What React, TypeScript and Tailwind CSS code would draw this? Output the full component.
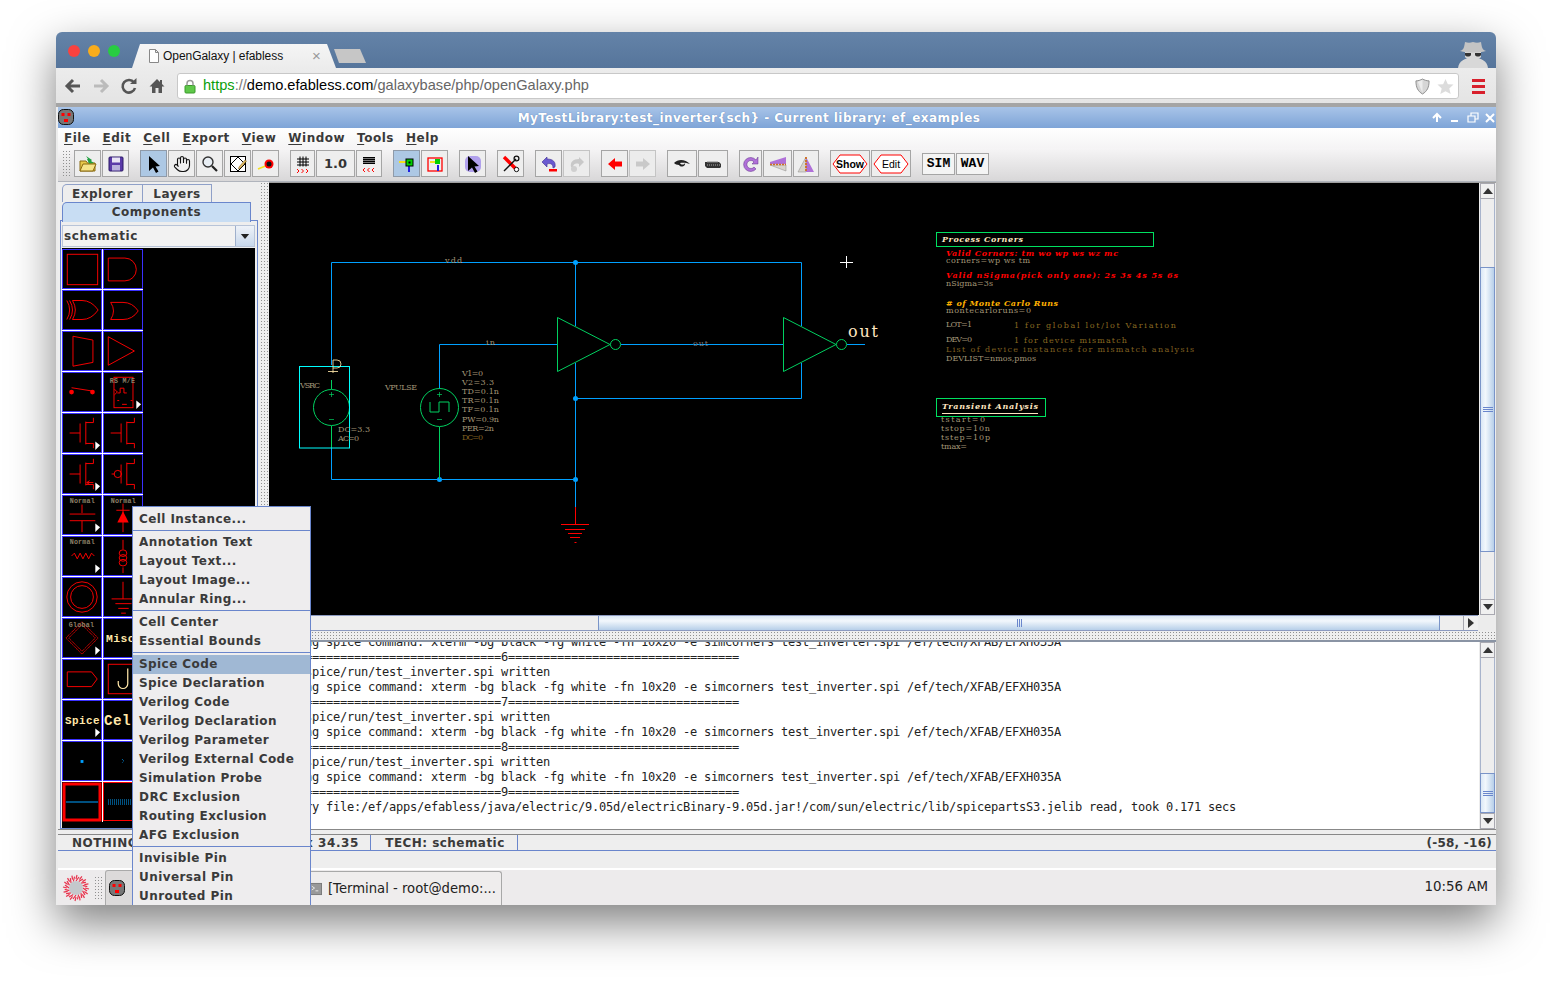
import React from "react";
import { Hand } from "lucide-react";

const R = "#ff0000";
const Tri = () => <polygon points="34,29 39,33 34,38" fill="#fff" />;
const Lbl = ({ t, x = 7, y = 7, c = "#8d8068" }: { t: string; x?: number; y?: number; c?: string }) => (
  <text x={x} y={y} fontSize="7" fill={c} fontFamily="'Liberation Mono', monospace" textLength={27}>{t}</text>
);
const Mos = ({ bubble, arrow }: { bubble?: boolean; arrow?: boolean }) => (
  <g stroke={R} fill="none">
    <path d={bubble ? "M8 20h3M19 20h-1" : "M7 20h11"} />
    {bubble && <circle cx="14.5" cy="20" r="3.8" />}
    <path d="M18 10v20M24 8v24M24 9h8V4M24 31h8v5" />
    {arrow && <path d="M25 29h7M25 29l3-2M25 29l3 2" />}
  </g>
);
const cells: React.ReactNode[] = [
  <rect x="4.5" y="4.5" width="32" height="32" fill="none" stroke={R} />,
  <path d="M4.5 8.5H22A12 12 0 0 1 22 32.5H4.5Z" fill="none" stroke={R} />,
  <g fill="none" stroke={R}><path d="M4 10Q10 20 4 30M7 10Q13 20 7 30M10 10Q16 20 10 30M10 10H20Q30 10 37 20Q30 30 20 30H10" /></g>,
  <g fill="none" stroke={R}><path d="M7 12Q13 21 7 30M7 12H20Q30 12 36 21Q30 30 20 30H7" /></g>,
  <polygon points="10.5,4.5 31.5,8.5 31.5,32 10.5,36" fill="none" stroke={R} />,
  <polygon points="4.5,5 32,20 4.5,35" fill="none" stroke={R} />,
  <g><circle cx="9" cy="20" r="2.5" fill={R} /><circle cx="31" cy="20" r="2.5" fill={R} /><path d="M9 15.5L31 19" stroke={R} fill="none" /></g>,
  <g><rect x="10.5" y="4.5" width="20" height="32" fill="none" stroke={R} /><path d="M11 17l3 3-3 3M14 21h3v-5h4v5h3M14 29h2M19 33h5M28 29h2" stroke={R} fill="none" /><Lbl t="RS M/E" x="6" y="10" /><Tri /></g>,
  <g><Mos /><Tri /></g>,
  <Mos />,
  <g><Mos arrow /><Tri /></g>,
  <Mos bubble />,
  <g><Lbl t="Normal" /><path d="M20 9v9M7 19h27M7 26h27M20 26v12" stroke={R} fill="none" /><Tri /></g>,
  <g><Lbl t="Normal" /><polygon points="20,16 26,28 14,28" fill={R} /><path d="M20 8v30M13 15h14" stroke={R} fill="none" /></g>,
  <g><Lbl t="Normal" /><path d="M9 20l3-3 3 6 3-6 3 6 3-6 3 6 3-6 3 3" stroke={R} fill="none" /><Tri /></g>,
  <g stroke={R} fill="none"><path d="M20 3v10M20 32v6" /><ellipse cx="20" cy="17" rx="4" ry="3.5" /><ellipse cx="20" cy="22" rx="4" ry="3.5" /><ellipse cx="20" cy="27" rx="4" ry="3.5" /></g>,
  <g stroke={R} fill="none"><circle cx="20" cy="20" r="16" /><circle cx="20" cy="20" r="12" /></g>,
  <path d="M20 4v18M8 22h25M12 27h17M15 32h11M18 37h5" stroke={R} fill="none" />,
  <g><polygon points="20,3 37,20 20,37 3,20" fill="none" stroke={R} strokeDasharray="1.2 0.6" /><polygon points="20,6 34,20 20,34 6,20" fill="none" stroke={R} strokeDasharray="1.2 0.6" /><Lbl t="Global" x="6" y="8" /><Tri /></g>,
  <text x="2" y="24" fontSize="12" fontWeight="700" fill="#ffe6a8" fontFamily="'Liberation Mono', monospace">Misc.</text>,
  <polygon points="4.5,12.5 30,12.5 36,20 30,28 4.5,28" fill="none" stroke={R} />,
  <g><rect x="4.5" y="4.5" width="36" height="31" fill="none" stroke={R} /><path d="M25 9v16a5 5 0 0 1-10 0v-3" fill="none" stroke="#ffe6a8" strokeWidth="1.3" /></g>,
  <g><text x="2" y="24" fontSize="11.5" fontWeight="700" fill="#ffe6a8" fontFamily="'Liberation Mono', monospace">Spice</text><Tri /></g>,
  <text x="0" y="25" fontSize="15" fontWeight="700" fill="#ffe6a8" fontFamily="'Liberation Mono', monospace">Cell</text>,
  <rect x="18.5" y="19" width="3" height="3" fill="#00a0ff" />,
  <path d="M19 18l2 2-2 2" stroke="#00a0ff" fill="none" strokeDasharray="1 1" />,
  <g><rect x="2" y="2" width="36" height="36" fill="none" stroke={R} strokeWidth="3" /><path d="M4 20h32" stroke="#00a0ff" /></g>,
  <g><rect x="0.5" y="0.5" width="45" height="38" fill="none" stroke={R} /><path d="M5 18h36M5 20h36M5 22h36" stroke="#00a0ff" strokeDasharray="1 1" /></g>,
];

const serif = "'DejaVu Serif', serif";
const T = ({ x, y, w, c = "#a39677", s = 8, it, b, children }: { x: number; y: number; w?: number; c?: string; s?: number; it?: boolean; b?: boolean; children: string }) => (
  <text x={x} y={y} fill={c} fontSize={s} fontFamily={serif} fontStyle={it ? "italic" : undefined} fontWeight={b ? 700 : 400} textLength={w} lengthAdjust={w ? "spacing" : undefined}>{children}</text>
);

const Schematic = () => {
  const blue = "#00a0ff";
  const green = "#00d060";
  return (
    <svg viewBox="269 183 1210 432" className="block w-[1210px] h-[432px] bg-black">
      <g fill="none" stroke={blue}>
        <path d="M331.5 365V262.5H801.5V326M575.5 262.5V326M575.5 363V507M801.5 363V398.5H575.5M331.5 448V479.5H575.5M439.5 388V344.5H557M621 344.5H783M847 344.5H865" />
      </g>
      <g fill={blue}>
        <circle cx="575.5" cy="262.5" r="2.5" />
        <circle cx="575.5" cy="398.5" r="2.5" />
        <circle cx="439.5" cy="479.5" r="2.5" />
        <circle cx="575.5" cy="479.5" r="2.5" />
      </g>
      <g fill="none" stroke={green}>
        <polygon points="557.5,317.5 610,344.5 557.5,371.5" />
        <circle cx="615.5" cy="344.5" r="5" />
        <polygon points="783.5,317.5 836,344.5 783.5,371.5" />
        <circle cx="841.5" cy="344.5" r="5" />
        <circle cx="331.5" cy="407.5" r="18" />
        <circle cx="439.5" cy="407.5" r="19" />
        <path d="M331.5 380V389M331.5 426V448M439.5 388V389M439.5 427V479M430 402V412H439V402H449V412" />
        <path d="M329 394.5h5M331.5 392v5M329 419.5h5M437 394.5h5M439.5 392v5M437 419.5h5" strokeOpacity="0.7" />
      </g>
      <rect x="299.5" y="366.5" width="50" height="81.5" fill="none" stroke="#00ffff" />
      <path d="M333 373V360h4a3 3 0 0 1 0 8h-4M328 371.5h10" fill="none" stroke="#ffe6a8" strokeOpacity="0.85" />
      <path d="M575.5 507V525M561 524.5H589M565 529.5H585M568 533.5H582M570 537.5H580M574.5 542.5H576.5" fill="none" stroke={R} />
      <path d="M846.5 256V268M840 262.5H853" fill="none" stroke="#fff" />

      <T x={445} y={263} w={17}>vdd</T>
      <T x={486} y={345} w={9}>in</T>
      <T x={693} y={346} w={15} c="#7a7a7a">out</T>
      <text x={848} y={337} fill="#ffe6c0" fontSize="16" fontFamily="'DejaVu Serif', serif" textLength={30}>out</text>
      <T x={300} y={388} w={20}>VSRC</T>
      <T x={385} y={390} w={32}>VPULSE</T>
      <T x={338} y={432} w={32}>DC=3.3</T>
      <T x={338} y={441} w={21}>AC=0</T>
      <T x={462} y={376} w={21}>V1=0</T>
      <T x={462} y={385} w={32}>V2=3.3</T>
      <T x={462} y={394} w={37}>TD=0.1n</T>
      <T x={462} y={403} w={37}>TR=0.1n</T>
      <T x={462} y={412} w={37}>TF=0.1n</T>
      <T x={462} y={422} w={37}>PW=0.9n</T>
      <T x={462} y={431} w={32}>PER=2n</T>
      <T x={462} y={440} w={21} c="#806020">DC=0</T>

      <rect x="936.5" y="232.5" width="217" height="14" fill="none" stroke="#00e060" />
      <T x={942} y={242} w={81} c="#ffe6c0" it b>Process Corners</T>
      <T x={946} y={256} w={172} c={R} it b>Valid Corners: tm wo wp ws wz mc</T>
      <T x={946} y={263} w={84}>corners=wp ws tm</T>
      <T x={946} y={278} w={232} c={R} it b>Valid nSigma(pick only one): 2s 3s 4s 5s 6s</T>
      <T x={946} y={286} w={47}>nSigma=3s</T>
      <T x={946} y={306} w={112} c="#ffb000" it b>{"# of Monte Carlo Runs"}</T>
      <T x={946} y={313} w={85}>montecarloruns=0</T>
      <T x={946} y={327} w={26}>LOT=1</T>
      <T x={1014} y={328} w={162} c="#8a6a20">1 for global lot/lot Variation</T>
      <T x={946} y={342} w={26}>DEV=0</T>
      <T x={1014} y={343} w={113} c="#8a6a20">1 for device mismatch</T>
      <T x={946} y={352} w={248} c="#806020">List of device instances for mismatch analysis</T>
      <T x={946} y={361} w={90}>DEVLIST=nmos,pmos</T>
      <rect x="936.5" y="398.5" width="109" height="18" fill="none" stroke="#00e060" />
      <T x={942} y={409} w={96} c="#ffe6c0" it b>Transient Analysis</T>
      <path d="M942 413.5H1038" stroke="#ffe6c0" />
      <T x={941} y={422} w={44}>tstart=0</T>
      <T x={941} y={431} w={49}>tstop=10n</T>
      <T x={941} y={440} w={49}>tstep=10p</T>
      <T x={941} y={449} w={26}>tmax=</T>
    </svg>
  );
};

const Btn = ({ w = 27, on, off, children }: { w?: number; on?: boolean; off?: boolean; children?: React.ReactNode }) => {
  const cls = on ? "bg-[#adc8e4] border-[#8f9aa8]" : off ? "bg-[#ececec] border-[#c4c4c4]" : "bg-[#eeeeee] border-[#a5a5a5]";
  return <div className={`h-[27px] border flex items-center justify-center shrink-0 ${cls}`} style={{ width: w }}>{children}</div>;
};
const Ic = ({ children }: { children: React.ReactNode }) => <svg viewBox="0 0 20 20" className="w-[20px] h-[20px]">{children}</svg>;
const Arrow = ({ c = "#000" }: { c?: string }) => <polygon points="5,2 5,17 9,13.5 12,19 14.5,17.5 11.5,12.5 16,12" fill={c} />;
const Gp = ({ children }: { children: React.ReactNode }) => <div className="flex gap-px">{children}</div>;
const gridIcon = (
  <path d="M4 5h12M4 8h12M4 11h12M7 2.5v10M10 2.5v10M13 2.5v10" stroke="#000" fill="none" />
);
const dots = "bg-[radial-gradient(circle,#909090_0.7px,transparent_0.9px)] bg-[length:3px_3px]";

const Toolbar = () => (
  <div className="h-[34px] flex items-start pt-[2px] pl-[4px] gap-[11px] bg-[linear-gradient(#f6f5f6,#d8d7d8)] border-b border-[#b0b4bc]">
    <div className={`w-[8px] h-[27px] -mr-[7px] shrink-0 ${dots}`} />
    <Gp>
      <Btn><Ic><path d="M2 7h6l1.5 2H17v8H2z" fill="#e8c84a" stroke="#8a6a10" /><path d="M2 17l3-7h13l-3 7z" fill="#f6e48a" stroke="#8a6a10" /><path d="M8 2l6 4-1 1 3 2-5 .5L9 5l1 0z" fill="#20a040" /></Ic></Btn>
      <Btn><Ic><rect x="3" y="3" width="14" height="14" rx="1" fill="#5a3aa8" stroke="#2c1a66" /><rect x="6" y="3.5" width="8" height="5" fill="#e8e4f4" /><rect x="6" y="11" width="8" height="5.5" fill="#b8b0dc" /></Ic></Btn>
    </Gp>
    <Gp>
      <Btn on><Ic><Arrow /></Ic></Btn>
      <Btn><Hand size={18} color="#111" strokeWidth={1.5} /></Btn>
      <Btn><Ic><circle cx="8" cy="8" r="5" fill="#e8eef4" stroke="#333" strokeWidth="1.4" /><path d="M12 12l5 5" stroke="#222" strokeWidth="2.2" /></Ic></Btn>
      <Btn><Ic><rect x="2.5" y="2.5" width="15" height="15" fill="#fff" stroke="#000" /><path d="M10 3L17 10 10 17 3 10Z" fill="none" stroke="#000" /><path d="M11 13l6-7 1.5 1-6 7-2 1z" fill="#e8c060" stroke="#705010" strokeWidth="0.5" /></Ic></Btn>
      <Btn><Ic><path d="M2 15l10-4" stroke="#f4e020" strokeWidth="1.6" /><circle cx="13" cy="10" r="4.5" fill={R} /><circle cx="13" cy="10" r="2.5" fill="#111" /></Ic></Btn>
    </Gp>
    <Gp>
      <Btn w={25}><Ic>{gridIcon}<path d="M4 15l2 2-2 2M8.5 15l2 2-2 2M13 15l2 2-2 2" stroke={R} fill="none" /></Ic></Btn>
      <Btn w={39}><span className="font-['DejaVu_Sans',sans-serif] font-bold text-[13px] text-[#333]">1.0</span></Btn>
      <Btn w={26}><Ic><path d="M4 3.5h12M4 5.5h12M4 7.5h12M4 9.5h12M5 3v7M7 3v7M9 3v7M11 3v7M13 3v7M15 3v7" stroke="#000" fill="none" /><path d="M6 14l-2 2 2 2M10.5 14l-2 2 2 2M15 14l-2 2 2 2" stroke={R} fill="none" /></Ic></Btn>
    </Gp>
    <Gp>
      <Btn on><Ic><path d="M2 8h12" stroke="#f4e020" strokeWidth="2" /><path d="M12 10v8" stroke="#2020e0" strokeWidth="2" /><rect x="9" y="5" width="7" height="7" fill="#00d000" stroke="#000" /><rect x="11.5" y="7.5" width="2" height="2" fill="#000" /></Ic></Btn>
      <Btn><Ic><rect x="3" y="4" width="14" height="13" fill="none" stroke={R} strokeWidth="1.3" /><path d="M5 8h7" stroke="#f4e020" strokeWidth="2" /><path d="M13 11v6" stroke="#2020e0" strokeWidth="2" /><rect x="10" y="5" width="5" height="5" fill="#00d000" /></Ic></Btn>
    </Gp>
    <Btn><Ic><rect x="2" y="2" width="16" height="16" rx="5" fill="#b0a0ec" /><Arrow /></Ic></Btn>
    <Btn><Ic><path d="M3 3l12 12" stroke={R} strokeWidth="3.4" /><path d="M3 17L15 5" stroke="#111" strokeWidth="1.5" /><circle cx="15.5" cy="4.5" r="2.4" fill="none" stroke="#111" strokeWidth="1.3" /><circle cx="15.5" cy="15.5" r="2.2" fill="#fff" stroke="#111" /></Ic></Btn>
    <Gp>
      <Btn><Ic><path d="M8 3L3 8l5 5v-3c3-1 6-.5 6 4l2-1c1-5-2-8-8-8z" fill="#6a5ad0" stroke="#3a2a90" strokeWidth="0.6" /><rect x="10" y="15" width="8" height="2.5" fill={R} /></Ic></Btn>
      <Btn off><Ic><path d="M12 3l5 5-5 5v-3c-3-1-6-.5-6 4L4 13C3 8 6 5 12 5z" fill="#c8c8c8" /><circle cx="7" cy="15" r="3" fill="#cfcfcf" /></Ic></Btn>
    </Gp>
    <Gp>
      <Btn><Ic><polygon points="3,10 10,4 10,7.5 17,7.5 17,12.5 10,12.5 10,16" fill={R} /></Ic></Btn>
      <Btn off><Ic><polygon points="17,10 10,4 10,7.5 3,7.5 3,12.5 10,12.5 10,16" fill="#c9c9c9" /></Ic></Btn>
    </Gp>
    <Gp>
      <Btn w={30}><Ic><path d="M2 9c4-4 11-4 16 1-4-1.5-8-1.5-10-1 1 2 4 2 5 0 1 3-4 5-6 2-2 0-4-1-5-2z" fill="#222" /></Ic></Btn>
      <Btn w={30}><Ic><path d="M2 8h14l2 2v3l-1 1H4l-2-2z" fill="#333" /><path d="M4 8h11" stroke="#888" /><path d="M4 11h13" stroke="#aaa" strokeDasharray="1 1" /></Ic></Btn>
    </Gp>
    <Gp>
      <Btn w={23}><Ic><path d="M15 6a7 7 0 1 0 0 9l-2-2a4 4 0 1 1 0-5l-2 2h6V3z" fill="#b070d8" stroke="#60308a" strokeWidth="0.5" /></Ic></Btn>
      <Btn w={29}><Ic><polygon points="2,8 18,3 18,10 2,10" fill="#b070d8" /><polygon points="2,11 18,11 18,17" fill="#d8d4cc" stroke="#888" strokeWidth="0.5" /><path d="M2 10.5h16" stroke="#d07020" strokeWidth="1.6" strokeDasharray="2 1" /></Ic></Btn>
      <Btn w={26}><Ic><polygon points="10,3 2,18 10,18" fill="#d8d4cc" stroke="#888" strokeWidth="0.5" /><polygon points="10,3 18,18 10,18" fill="#b070d8" /><path d="M10 3v15" stroke="#d07020" strokeWidth="1.8" strokeDasharray="2 1" /></Ic></Btn>
    </Gp>
    <Gp>
      <Btn w={40}><svg viewBox="0 0 36 20" className="w-[36px] h-[20px]"><polygon points="1,10 8,1 28,1 35,10 28,19 8,19" fill="#fff" stroke={R} /><text x="18" y="14" textAnchor="middle" fontSize="10.5" fontWeight="700" fill="#000" fontFamily="'Liberation Sans', sans-serif">Show</text></svg></Btn>
      <Btn w={40}><svg viewBox="0 0 36 20" className="w-[36px] h-[20px]"><polygon points="1,10 8,1 28,1 35,10 28,19 8,19" fill="#fff" stroke={R} /><text x="18" y="14" textAnchor="middle" fontSize="10.5" fill="#000" fontFamily="'Liberation Sans', sans-serif">Edit</text></svg></Btn>
    </Gp>
    <Gp>
      <div className="mt-[3px]"><div className="w-[33px] h-[22px] border border-[#a5a5a5] bg-[#f4f4f4] flex items-center justify-center font-['Liberation_Mono',monospace] font-bold text-[13px] text-black">SIM</div></div>
      <div className="mt-[3px]"><div className="w-[33px] h-[22px] border border-[#a5a5a5] bg-[#f4f4f4] flex items-center justify-center font-['Liberation_Mono',monospace] font-bold text-[13px] text-black">WAV</div></div>
    </Gp>
  </div>
);

const menuGroups = [
  ["Cell Instance..."],
  ["Annotation Text", "Layout Text...", "Layout Image...", "Annular Ring..."],
  ["Cell Center", "Essential Bounds"],
  ["Spice Code", "Spice Declaration", "Verilog Code", "Verilog Declaration", "Verilog Parameter", "Verilog External Code", "Simulation Probe", "DRC Exclusion", "Routing Exclusion", "AFG Exclusion"],
  ["Invisible Pin", "Universal Pin", "Unrouted Pin"],
];

const Menu = () => (
  <div className="absolute left-[76px] top-[474px] w-[179px] bg-[#eeedee] border border-[#6a86cc] pt-[3px] font-['DejaVu_Sans',sans-serif] font-bold text-[12px] tracking-[0.42px] text-[#3a3a3a]">
    {menuGroups.map((g, i) => (
      <div key={i} className={i ? "border-t border-[#6a86cc] pt-[2px] pb-px" : "pb-px"}>
        {g.map((m) => (
          <div key={m} className={`h-[19px] leading-[19px] pl-[6px] whitespace-nowrap ${m === "Spice Code" ? "bg-[#a0b8d4]" : ""}`}>{m}</div>
        ))}
      </div>
    ))}
  </div>
);

const eq = "=================================";
const cmd = "Running spice command: xterm -bg black -fg white -fn 10x20 -e simcorners test_inverter.spi /ef/tech/XFAB/EFXH035A";
const wr = "/tmp/spice/run/test_inverter.spi written";
const logLines = [
  cmd, `${eq}6${eq}`, wr, cmd, `${eq}7${eq}`, wr, cmd, `${eq}8${eq}`, wr, cmd, `${eq}9${eq}`,
  "Library file:/ef/apps/efabless/java/electric/9.05d/electricBinary-9.05d.jar!/com/sun/electric/lib/spicepartsS3.jelib read, took 0.171 secs",
];

const Up = () => <svg viewBox="0 0 10 6" className="w-[10px] h-[6px]"><polygon points="0,6 5,0 10,6" fill="#333" /></svg>;
const Down = () => <svg viewBox="0 0 10 6" className="w-[10px] h-[6px]"><polygon points="0,0 10,0 5,6" fill="#333" /></svg>;
const VBtn = ({ children }: { children: React.ReactNode }) => (
  <div className="h-[16px] shrink-0 border border-[#a8a8b0] bg-[#f0f0f0] flex items-center justify-center">{children}</div>
);
const Grip = () => (
  <div className="flex flex-col gap-[1px] w-[10px]">
    <div className="h-px bg-[#6a86cc]" /><div className="h-px bg-[#6a86cc]" /><div className="h-px bg-[#6a86cc]" />
  </div>
);
const VThumb = ({ h }: { h: number }) => (
  <div className="shrink-0 border border-[#7a94c8] bg-[linear-gradient(90deg,#dbe8f6,#f2f7fc_35%,#b7cfe9)] flex items-center justify-center" style={{ height: h }}><Grip /></div>
);
const Track = ({ h }: { h: number }) => <div className="shrink-0 bg-[#eeeeee] border-x border-[#a8b4cc]" style={{ height: h }} />;

const Skull = () => (
  <svg viewBox="0 0 16 16" className="w-[16px] h-[16px]">
    <rect x="0.5" y="0.5" width="15" height="15" rx="5" fill="#777" stroke="#111" />
    <rect x="3.5" y="4" width="3" height="3" fill={R} /><rect x="9.5" y="4" width="3" height="3" fill={R} />
    <rect x="6" y="10" width="4" height="3" fill={R} />
  </svg>
);

export default function App() {
  return (
    <div className="w-[1552px] h-[985px] bg-white pt-[32px] pl-[56px] overflow-hidden">
      <div className="relative w-[1440px] h-[873px] flex flex-col rounded-t-[6px] overflow-hidden bg-[#ececec] shadow-[0_18px_45px_rgba(0,0,0,0.5)]">
        {/* Browser tab strip */}
        <div className="relative h-[36px] shrink-0 bg-[linear-gradient(#6483a8,#56759b)] flex items-end pl-[76px]">
          <div className="absolute left-[12px] top-[13px] flex gap-[8px]">
            <span className="w-[12px] h-[12px] rounded-full bg-[#f9423f]" />
            <span className="w-[12px] h-[12px] rounded-full bg-[#f8ac1c]" />
            <span className="w-[12px] h-[12px] rounded-full bg-[#28cc42]" />
          </div>
          <div className="relative w-[204px] h-[24px] bg-[linear-gradient(#f5f5f5,#ececec)] [clip-path:polygon(0_100%,8px_0,195px_0,204px_100%)] flex items-center pl-[16px] font-['Liberation_Sans',sans-serif] text-[12px] tracking-[-0.05px] text-[#111]">
            <svg viewBox="0 0 12 14" className="w-[12px] h-[14px] mr-[3px]"><path d="M1.5.5h6l3 3v10h-9z M7.5.5v3h3" fill="#fff" stroke="#888" /></svg>
            <span>OpenGalaxy | efabless</span>
            <span className="absolute left-[180px] top-[3px] text-[15px] text-[#999] leading-[18px]">×</span>
          </div>
          <div className="w-[32px] h-[14px] mb-[5px] -ml-[2px] bg-[#c6c6c6] [clip-path:polygon(0_0,26px_0,32px_100%,5px_100%)]" />
          <svg viewBox="0 0 34 30" className="absolute left-[1400px] top-[6px] w-[34px] h-[30px]">
            <path d="M2 30c1-7 6-10 15-10s14 3 15 10z" fill="#d8d8d8" />
            <path d="M9 13h16v6c-2 4-14 4-16 0z" fill="#d8d8d8" />
            <path d="M4 13c3-1 4-2 5-9 3 1 5 1 8 0 3 1 5 1 8 0 1 7 2 8 5 9-8 2-18 2-26 0z" fill="#c4c4c4" />
            <path d="M9 15h6v2c-1 2-5 2-6 0zM19 15h6v2c-1 2-5 2-6 0z" fill="#333" />
          </svg>
        </div>
        {/* Address bar */}
        <div className="h-[39px] shrink-0 pt-px bg-[linear-gradient(#ececec,#e4e4e4)] border-b-[4px] border-[#a5a5a5] flex items-center pl-[8px] pr-[11px]">
          <div className="flex items-center gap-[10px] w-[113px] shrink-0">
            <svg viewBox="0 0 18 18" className="w-[18px] h-[18px]"><path d="M16 9H4M9 3L3 9l6 6" fill="none" stroke="#555" strokeWidth="3" /></svg>
            <svg viewBox="0 0 18 18" className="w-[18px] h-[18px]"><path d="M2 9h12M9 3l6 6-6 6" fill="none" stroke="#bbb" strokeWidth="3" /></svg>
            <svg viewBox="0 0 18 18" className="w-[18px] h-[18px]"><path d="M14 5.5A6.3 6.3 0 1 0 15 11" fill="none" stroke="#555" strokeWidth="2.6" /><polygon points="10,7 16.5,7 16.5,1" fill="#555" /></svg>
            <svg viewBox="0 0 18 18" className="w-[18px] h-[18px]"><path d="M9 2L1.5 9.5H4V16h3.5v-5h3v5H14V9.5h2.5L14 7V3h-2v2z" fill="#555" /></svg>
          </div>
          <div className="flex-1 h-[26px] bg-white border border-[#c8c8c8] rounded-[3px] flex items-center pl-[6px] pr-[4px] font-['Liberation_Sans',sans-serif] text-[14.6px] whitespace-nowrap">
            <svg viewBox="0 0 12 14" className="w-[12px] h-[15px] mr-[7px]"><rect x="1" y="6" width="10" height="7.5" rx="1" fill="#5fc84a" stroke="#3a9a2a" /><path d="M3 6V4a3 3 0 0 1 6 0v2" fill="none" stroke="#9a9a9a" strokeWidth="1.5" /></svg>
            <span className="text-[#0a9e0a]">https</span><span className="text-[#777]">://</span><span className="text-black">demo.efabless.com</span><span className="text-[#666]">/galaxybase/php/openGalaxy.php</span>
            <div className="flex-1" />
            <svg viewBox="0 0 16 18" className="w-[15px] h-[17px] mr-[7px]"><path d="M8 1c2 1 4 2 7 2 0 7-2 11-7 14C3 14 1 10 1 3c3 0 5-1 7-2z" fill="#d6d6d6" stroke="#8a8a8a" /><path d="M8 2v14L3 4z" fill="#ececec" /></svg>
            <svg viewBox="0 0 18 18" className="w-[17px] h-[17px]"><polygon points="9,1 11.5,6.5 17.5,7 13,11 14.5,17 9,14 3.5,17 5,11 .5,7 6.5,6.5" fill="#dcdcdc" /></svg>
          </div>
          <div className="w-[13px] ml-[13px] flex flex-col gap-[3px] shrink-0">
            <div className="w-[13px] h-[3px] bg-[#d8202c]" /><div className="w-[13px] h-[3px] bg-[#d8202c]" /><div className="w-[13px] h-[3px] bg-[#d8202c]" />
          </div>
        </div>
        {/* Java app */}
        <div className="flex-1 flex flex-col pl-[2px] min-h-0 font-['DejaVu_Sans',sans-serif]">
          <div className="relative h-[21px] shrink-0 pt-px bg-[linear-gradient(#a8c4e8,#7ea4d7)] flex items-center justify-center text-white font-bold text-[12px] tracking-[0.46px] pr-[56px]">
            <div className="absolute left-0 top-[2px]"><Skull /></div>
            <span className="[text-shadow:0_0_1px_#5577aa]">MyTestLibrary:test_inverter{"{sch}"} - Current library: ef_examples</span>
            <svg viewBox="0 0 66 12" className="absolute right-0 top-[5px] w-[66px] h-[12px]">
              <path d="M7 10V3M3 6l4-4 4 4" stroke="#fff" strokeWidth="2" fill="none" />
              <path d="M21 9h7" stroke="#fff" strokeWidth="2" />
              <path d="M38 4h7v6h-7zM41 4V1h7v6h-3" stroke="#fff" strokeWidth="1.2" fill="none" />
              <path d="M56 2l8 8M64 2l-8 8" stroke="#fff" strokeWidth="2" />
            </svg>
          </div>
          <div className="h-[20px] shrink-0 bg-[linear-gradient(#ffffff,#f5f4f5)] flex items-center pl-[6px] gap-[12px] font-bold text-[12px] tracking-[0.5px] text-[#3a3a3a]">
            {["File", "Edit", "Cell", "Export", "View", "Window", "Tools", "Help"].map((m) => (
              <span key={m}><span className="underline underline-offset-2">{m[0]}</span>{m.slice(1)}</span>
            ))}
          </div>
          <Toolbar />
          <div className="h-[647px] shrink-0 flex min-h-0">
            {/* Left panel */}
            <div className="w-[202px] shrink-0 pl-[2px] pt-[2px] flex flex-col bg-[#eeeeee] font-bold text-[12px] tracking-[0.5px] text-[#3a3a3a]">
              <div className="flex h-[18px] pl-[2px] shrink-0">
                <div className="w-[81px] border border-b-0 border-[#8fa0c8] rounded-tl-[5px] flex items-center justify-center">Explorer</div>
                <div className="w-[69px] border border-b-0 border-l-0 border-[#8fa0c8] flex items-center justify-center">Layers</div>
              </div>
              <div className="relative z-10 h-[20px] shrink-0 ml-[2px] w-[189px] pb-[2px] bg-[#c8ddf3] border border-b-0 border-[#6a86cc] rounded-tl-[5px] flex items-center justify-center">Components</div>
              <div className="flex-1 -mt-[2px] w-[198px] border border-[#6a86cc] pt-[4px] pl-px pr-[2px] flex flex-col min-h-0">
                <div className="h-[22px] shrink-0 flex border border-[#b8c4d8] bg-[#f2f2f2]">
                  <div className="flex-1 pl-[1px] leading-[20px] tracking-[0.6px]">schematic</div>
                  <div className="w-[19px] border-l border-[#9fb0cc] bg-[linear-gradient(#eef2f8,#c8d8ec)] flex items-center justify-center"><svg viewBox="0 0 10 6" className="w-[10px] h-[5px]"><polygon points="0,0 10,0 5,6" fill="#222" /></svg></div>
                </div>
                <div className="flex-1 mt-px bg-black pt-px">
                  <div className="grid grid-cols-[40px_40px] auto-rows-[40px] gap-px bg-white w-[81px]">
                    {cells.map((c, i) => (
                      <div key={i} className={`bg-black ${i >= 26 ? "" : "border border-[#3a30ff]"}`}>
                        <svg viewBox="0 0 40 40" className="w-full h-full overflow-visible">{c}</svg>
                      </div>
                    ))}
                  </div>
                </div>
              </div>
            </div>
            {/* splitter */}
            <div className={`w-[9px] shrink-0 bg-[#eeeeee] ${dots}`} />
            {/* Right */}
            <div className="flex-1 flex flex-col min-w-0 border-t border-[#a0a0a0]">
              <div className="flex h-[432px] shrink-0">
                <Schematic />
                <div className="w-[15px] ml-px flex flex-col">
                  <VBtn><Up /></VBtn>
                  <Track h={68} />
                  <VThumb h={285} />
                  <Track h={47} />
                  <VBtn><Down /></VBtn>
                </div>
              </div>
              <div className="h-[16px] shrink-0 flex border-y border-[#8c9ac0] w-[1209px]">
                <div className="w-[329px] bg-[#eeeeee]" />
                <div className="w-[842px] border-x border-[#7a94c8] bg-[linear-gradient(#dbe8f6,#f2f7fc_35%,#b7cfe9)] flex items-center justify-center">
                  <div className="flex gap-px h-[8px]"><div className="w-px bg-[#6a86cc]" /><div className="w-px bg-[#6a86cc]" /><div className="w-px bg-[#6a86cc]" /></div>
                </div>
                <div className="w-[23px] bg-[#eeeeee]" />
                <div className="w-[15px] border-l border-[#a8a8b0] bg-[#f0f0f0] flex items-center justify-center"><svg viewBox="0 0 6 10" className="w-[6px] h-[10px]"><polygon points="0,0 6,5 0,10" fill="#333" /></svg></div>
              </div>
              <div className={`h-[11px] shrink-0 bg-[#eeeeee] border-b-[2px] border-[#8a94a4] ${dots}`} />
              <div className="flex-1 flex min-h-0">
                <div className="w-[1210px] bg-white overflow-hidden pl-px">
                  <div className="-mt-[7px] font-['DejaVu_Sans_Mono',monospace] font-normal text-[12px] tracking-[-0.225px] leading-[15px] text-[#222] whitespace-pre">
                    {logLines.map((l, i) => <div key={i}>{l}</div>)}
                  </div>
                </div>
                <div className="w-[15px] ml-px flex flex-col">
                  <VBtn><Up /></VBtn>
                  <Track h={115} />
                  <VThumb h={40} />
                  <VBtn><Down /></VBtn>
                </div>
              </div>
            </div>
          </div>
          {/* Status */}
          <div className="h-[6px] shrink-0 bg-[#eeeeee] border-y border-[#888]" />
          <div className="h-[16px] shrink-0 flex items-center bg-[#eeeeee] border-b border-[#6a86cc] font-bold text-[12px] tracking-[0.45px] text-[#3a3a3a] whitespace-nowrap">
            <div className="w-[313px] pl-[14px] text-left overflow-hidden flex items-center justify-between pr-[11px] h-full border-r border-[#6a86cc]">
              <span>NOTHING SELECTED</span><span className="tracking-[0.6px]">x 34.35</span>
            </div>
            <div className="w-[147px] h-full pl-[2px] border-r border-[#6a86cc] flex items-center justify-center">TECH: schematic</div>
            <div className="flex-1" />
            <span className="pr-[4px] tracking-[0.25px]">(-58, -16)</span>
          </div>
          <div className="h-[17px] shrink-0 bg-[#eeeeee]" />
          {/* Taskbar */}
          <div className="flex-1 flex items-end border-t-[2px] border-white bg-[#edebec] font-normal text-[13.2px] text-[#222]">
            <div className="w-[36px] h-full flex items-center justify-center shrink-0">
              <svg viewBox="0 0 28 28" className="w-[28px] h-[28px]">
                <g stroke="#e8304a" strokeWidth="1.2">
                  {Array.from({ length: 16 }).map((_, i) => (
                    <path key={i} d="M14 5L15 1" transform={`rotate(${i * 22.5} 14 14)`} />
                  ))}
                  {Array.from({ length: 16 }).map((_, i) => (
                    <path key={`b${i}`} d="M14 7L17 3" transform={`rotate(${i * 22.5} 14 14)`} />
                  ))}
                </g>
                <circle cx="14" cy="14" r="7" fill="#c4c8cc" />
              </svg>
            </div>
            <div className={`w-[8px] h-[24px] self-center shrink-0 ${dots}`} />
            <div className="ml-[3px] h-[35px] w-[44px] shrink-0 bg-[#dcdada] border border-b-0 border-[#aaa] rounded-t-[3px] flex items-center pl-[3px]"><Skull /></div>
            <div className="ml-[150px] w-[203px] h-[34px] shrink-0 bg-[#efeded] border border-b-0 border-[#a8a8a8] rounded-t-[3px] flex items-center justify-end pr-[5px] whitespace-nowrap">
              <svg viewBox="0 0 14 14" className="w-[13px] h-[14px] mr-[6px]"><rect x="0.5" y="1" width="13" height="12" fill="#999" stroke="#777" /><path d="M3 4l3 2-3 2M7 9h3" stroke="#eee" fill="none" /></svg>
              <span>[Terminal - root@demo:...</span>
            </div>
            <div className="flex-1" />
            <div className="self-center pr-[8px] text-[13.4px]">10:56 AM</div>
          </div>
        </div>
        <Menu />
      </div>
    </div>
  );
}
